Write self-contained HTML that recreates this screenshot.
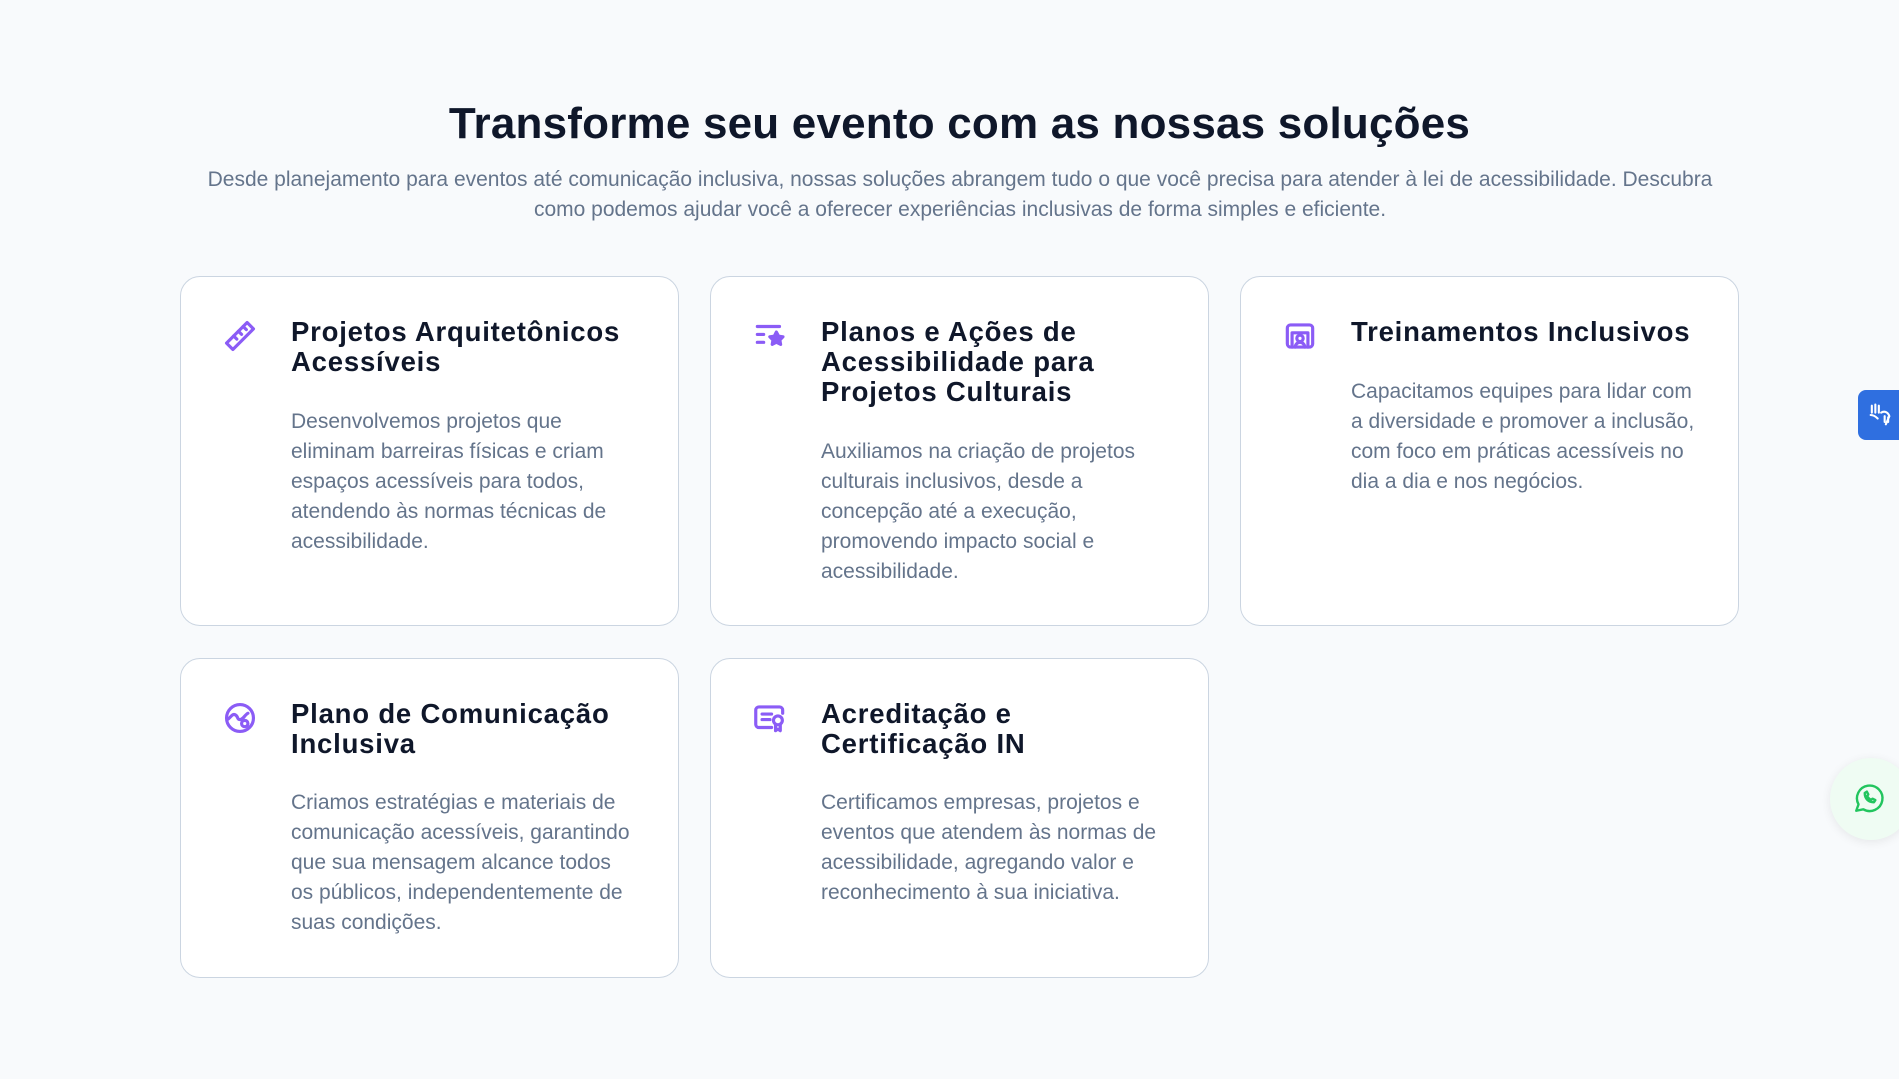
<!DOCTYPE html>
<html><head><meta charset="utf-8"><style>
*{margin:0;padding:0;box-sizing:border-box}
body{width:1899px;height:1079px;background:#f8fafc;font-family:"Liberation Sans",sans-serif;position:relative;overflow:hidden}
h1{position:absolute;top:99px;left:10px;width:1899px;text-align:center;font-size:44px;font-weight:bold;color:#0f172a;letter-spacing:0.2px}
.sub{position:absolute;top:165px;left:150px;width:1620px;text-align:center;font-size:21px;line-height:30px;color:#64748b}
.card{position:absolute;background:#fff;border:1.5px solid #cbd5e1;border-radius:20px;width:499px}
.card svg{position:absolute;left:40px;top:40px;width:38px;height:38px}
.card h3{position:absolute;left:110px;top:40px;font-size:27.5px;line-height:30px;font-weight:bold;color:#0f172a;width:380px;letter-spacing:0.8px}
.card p{position:absolute;left:110px;font-size:21px;line-height:30px;color:#64748b;width:380px}
</style></head><body>
<h1>Transforme seu evento com as nossas soluções</h1>
<div class="sub">Desde planejamento para eventos até comunicação inclusiva, nossas soluções abrangem tudo o que você precisa para atender à lei de acessibilidade. Descubra<br>como podemos ajudar você a oferecer experiências inclusivas de forma simples e eficiente.</div>

<div class="card" style="left:180px;top:276px;height:350px">
<svg viewBox="0 0 24 24" fill="none" stroke="#8b5cf6" stroke-width="2" stroke-linecap="round" stroke-linejoin="round"><path d="M3.5 16.5l13-13 4 4-13 13z"/><path d="M8 12l2 2M11 9l2 2M14 6l2 2"/></svg>
<h3>Projetos Arquitetônicos<br>Acessíveis</h3>
<p style="top:130px">Desenvolvemos projetos que<br>eliminam barreiras físicas e criam<br>espaços acessíveis para todos,<br>atendendo às normas técnicas de<br>acessibilidade.</p>
</div>

<div class="card" style="left:710px;top:276px;height:350px">
<svg viewBox="0 0 24 24" fill="none" stroke="#8b5cf6" stroke-width="2" stroke-linecap="round" stroke-linejoin="round"><path d="M4 6h14M4 11h4M4 16h4"/><path d="M16 9.5l1.4 2.6 2.8.4-2 2 .5 2.8-2.7-1.4-2.6 1.4.5-2.8-2-2 2.8-.4z" fill="#8b5cf6"/></svg>
<h3>Planos e Ações de<br>Acessibilidade para<br>Projetos Culturais</h3>
<p style="top:160px">Auxiliamos na criação de projetos<br>culturais inclusivos, desde a<br>concepção até a execução,<br>promovendo impacto social e<br>acessibilidade.</p>
</div>

<div class="card" style="left:1240px;top:276px;height:350px">
<svg viewBox="0 0 24 24" fill="none" stroke="#8b5cf6" stroke-width="2" stroke-linecap="round" stroke-linejoin="round"><rect x="4" y="5" width="16" height="14" rx="2"/><path d="M7 19v-9h10v9"/><circle cx="12" cy="13.5" r="2"/><path d="M9 19a3 3 0 0 1 6 0"/></svg>
<h3>Treinamentos Inclusivos</h3>
<p style="top:100px">Capacitamos equipes para lidar com<br>a diversidade e promover a inclusão,<br>com foco em práticas acessíveis no<br>dia a dia e nos negócios.</p>
</div>

<div class="card" style="left:180px;top:658px;height:320px">
<svg viewBox="0 0 24 24" fill="none" stroke="#8b5cf6" stroke-width="2" stroke-linecap="round" stroke-linejoin="round"><circle cx="12" cy="12" r="8.5"/><path d="M4 13c2-1 3-4 5-3s1 3 3 3 3-3 5-4"/><circle cx="15" cy="15.5" r="2"/></svg>
<h3>Plano de Comunicação<br>Inclusiva</h3>
<p style="top:129px">Criamos estratégias e materiais de<br>comunicação acessíveis, garantindo<br>que sua mensagem alcance todos<br>os públicos, independentemente de<br>suas condições.</p>
</div>

<div class="card" style="left:710px;top:658px;height:320px">
<svg viewBox="0 0 24 24" fill="none" stroke="#8b5cf6" stroke-width="2" stroke-linecap="round" stroke-linejoin="round"><path d="M13 18H5a2 2 0 0 1-2-2V7a2 2 0 0 1 2-2h13a2 2 0 0 1 2 2v2"/><path d="M7 9.5h6M7 13h5"/><circle cx="17" cy="13.5" r="2.8"/><path d="M15.5 16v4l1.5-1 1.5 1v-4"/></svg>
<h3>Acreditação e<br>Certificação IN</h3>
<p style="top:129px">Certificamos empresas, projetos e<br>eventos que atendem às normas de<br>acessibilidade, agregando valor e<br>reconhecimento à sua iniciativa.</p>
</div>

<div style="position:absolute;left:1858px;top:390px;width:50px;height:50px;background:#2f6fe0;border-radius:8px"><svg viewBox="0 0 24 24" width="28" height="28" style="position:absolute;left:8px;top:11px" fill="none" stroke="#fff" stroke-width="1.8" stroke-linecap="round"><path d="M5 4v6M8 3v7M11 4v6M4 12c2 0 4 1 6 3M13 10c3-2 6 0 7 3l-3 7M16 13v5M19 14v4"/></svg></div>
<div style="position:absolute;left:1830px;top:758px;width:82px;height:82px;border-radius:50%;background:#effcf3;box-shadow:0 2px 10px rgba(0,0,0,0.08)"><svg viewBox="0 0 24 24" width="34" height="34" style="position:absolute;left:22px;top:23px" fill="none" stroke="#22c55e" stroke-width="1.7" stroke-linecap="round" stroke-linejoin="round"><path d="M3 21l1.6-4.5A9 9 0 1 1 8 20z"/><path d="M9 8.5c0 4 2.5 6.5 6.5 6.5l1-1.5-2-1-1 .8c-1.2-.5-2.3-1.6-2.8-2.8l.8-1-1-2z"/></svg></div>
</body></html>
